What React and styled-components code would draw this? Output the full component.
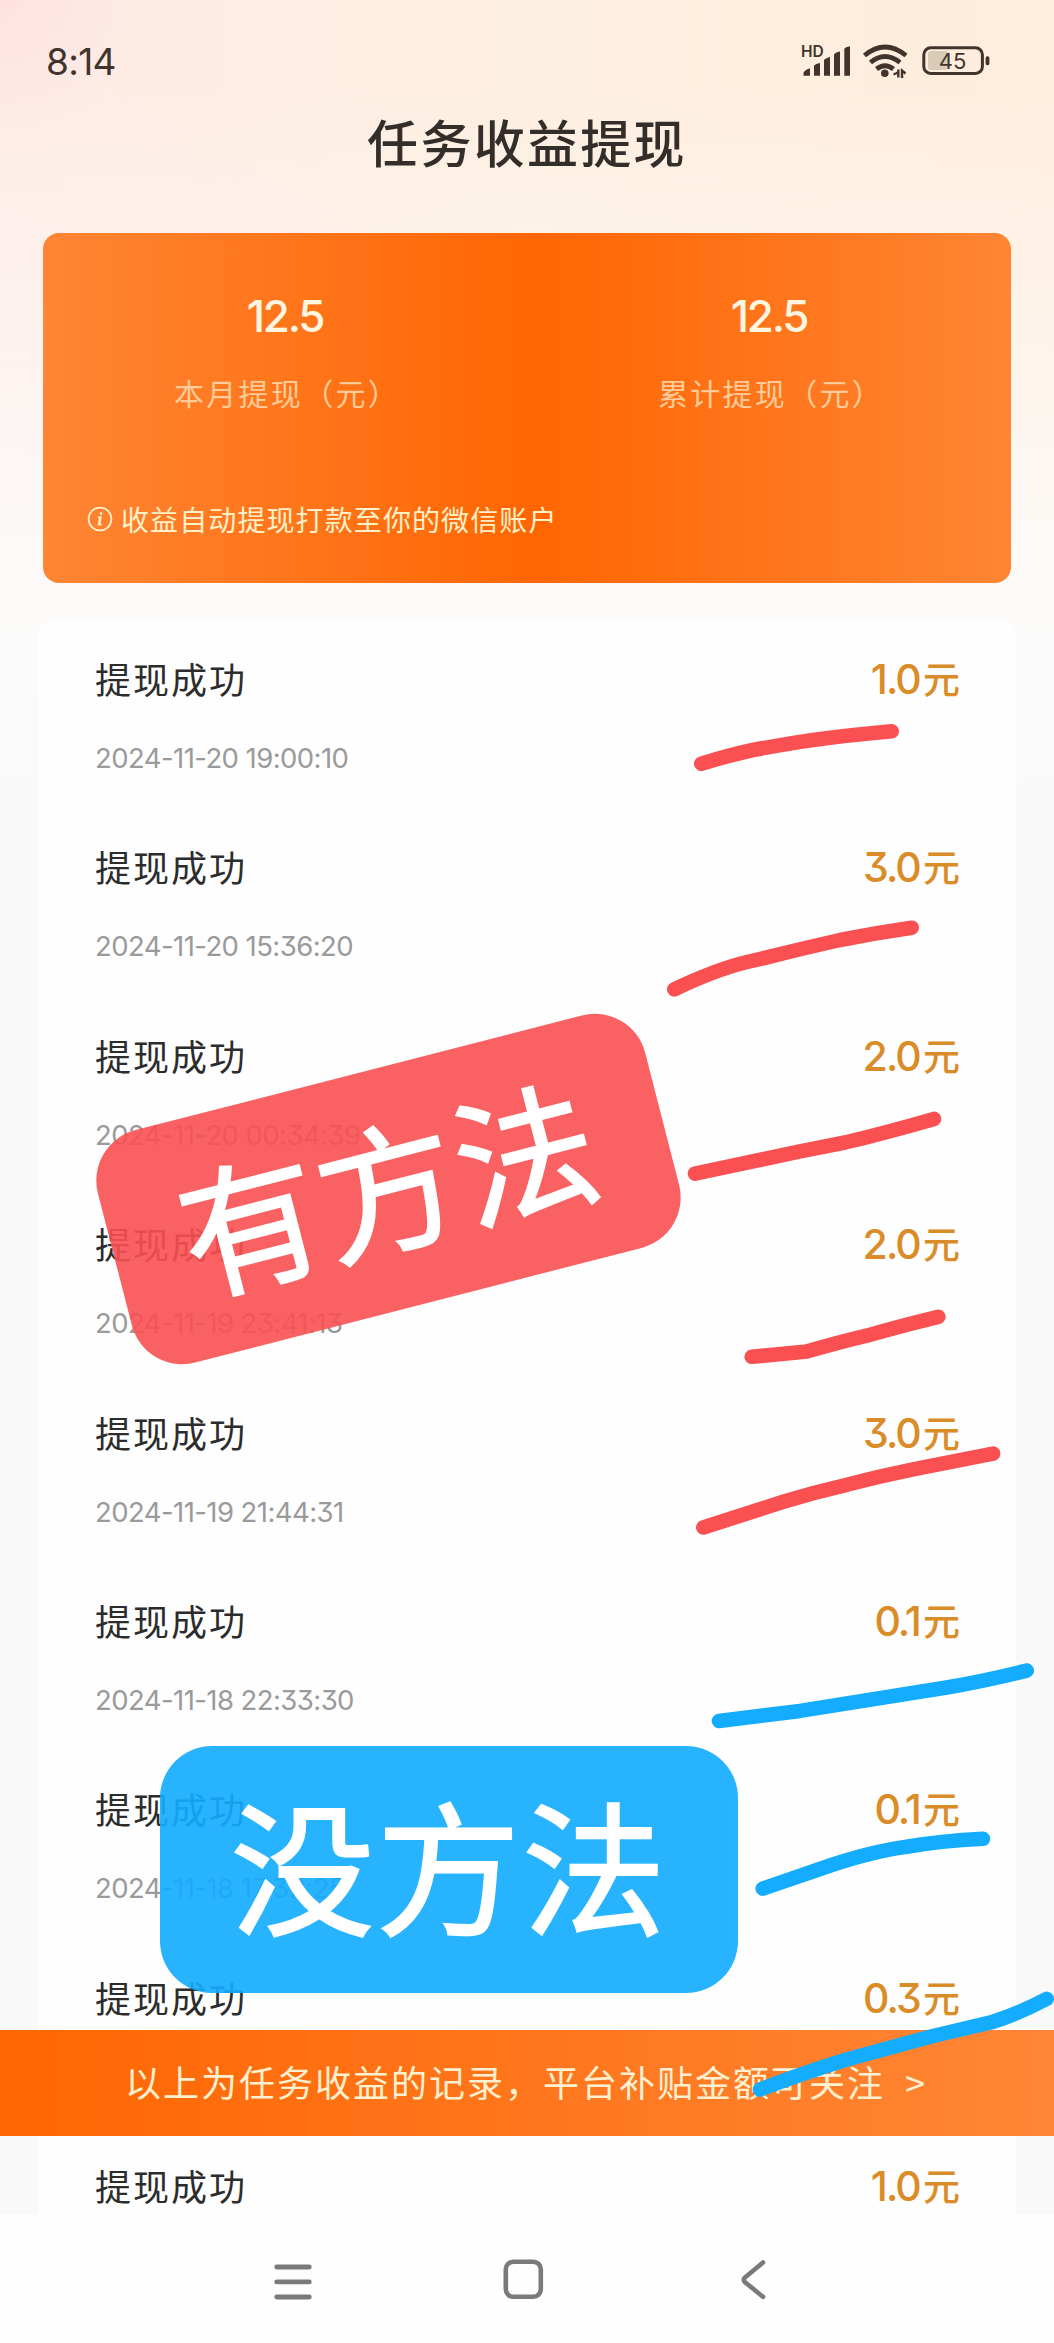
import React from "react";
import styled, { createGlobalStyle } from "styled-components";

const cjk = `"Noto Sans CJK SC", sans-serif`;
const latin = `Inter, "Noto Sans CJK SC", sans-serif`;

const GlobalStyle = createGlobalStyle`
  * {
    box-sizing: border-box;
  }
  body {
    margin: 0;
    background: #fff;
    font-family: ${cjk};
  }
`;

const Page = styled.div`
  position: relative;
  display: flex;
  flex-direction: column;
  width: 1054px;
  height: 2343px;
  overflow: hidden;
  background:
    radial-gradient(circle at 0 0, rgba(255, 220, 222, 0.6), rgba(255, 226, 222, 0) 140px),
    linear-gradient(180deg, rgba(251, 250, 249, 0) 80px, #fcfbfa 620px, #f9f9fa 820px),
    linear-gradient(90deg, #feebe6, #fdefe0 50%, #ffeddd);
`;

const StatusBar = styled.div`
  display: flex;
  align-items: center;
  justify-content: space-between;
  height: 124px;
  padding: 0 64px 0 46px;
  color: #40342c;
`;

const Clock = styled.span`
  padding-bottom: 2px;
  font: 400 37px ${latin};
  letter-spacing: -0.7px;
`;

const Title = styled.h1`
  height: 109px;
  margin: 0;
  font-size: 51px;
  font-weight: 500;
  line-height: 34px;
  letter-spacing: 2.3px;
  text-align: center;
  color: #332e2a;
`;

const SummaryCard = styled.section`
  width: 968px;
  height: 350px;
  margin: 0 43px;
  padding-top: 56px;
  border-radius: 16px;
  background: linear-gradient(90deg, #ff8534, #ff6602 51%, #ff8534);
`;

const Totals = styled.div`
  display: grid;
  grid-template-columns: 1fr 1fr;
`;

const Total = styled.div`
  display: flex;
  flex-direction: column;
  align-items: center;
`;

const TotalValue = styled.div`
  font: 500 44px/54px ${latin};
  letter-spacing: -2.2px;
  color: #fff6e2;
`;

const TotalLabel = styled.div`
  margin-top: 27px;
  padding-left: 4px;
  font-size: 30px;
  line-height: 44px;
  letter-spacing: 2.3px;
  color: #ffcb98;
`;

const Note = styled.div`
  display: flex;
  align-items: center;
  gap: 8px;
  margin: 85px 0 0 44px;
  font-size: 28px;
  line-height: 40px;
  letter-spacing: 1.1px;
  color: #fff0c8;
`;

const Records = styled.ul`
  flex: 1;
  min-height: 0;
  width: 978px;
  margin: 39px 38px 0;
  padding: 30px 58px 0 57px;
  overflow: hidden;
  list-style: none;
  border-radius: 12px 12px 0 0;
  background: #fefefe;
`;

const Record = styled.li`
  height: 188.4px;
`;

const RecordHead = styled.div`
  display: flex;
  align-items: center;
  justify-content: space-between;
  height: 52px;
`;

const RecordName = styled.span`
  font-size: 36px;
  letter-spacing: 2px;
  color: #2c2c2c;
`;

const Amount = styled.span`
  display: flex;
  align-items: center;
  padding-top: 2px;
  font: 500 41px/52px ${latin};
  font-feature-settings: "cv09";
  letter-spacing: -1.9px;
  color: #d98c28;
`;

const Unit = styled.span`
  margin: -2px 0 0 3px;
  font: 500 37px/52px ${cjk};
`;

const RecordTime = styled.div`
  margin-top: 32px;
  font: 400 27.5px/44px ${latin};
  font-feature-settings: "cv09";
  letter-spacing: -0.57px;
  color: #9a9a9a;
`;

const NavBar = styled.nav`
  display: flex;
  justify-content: space-between;
  height: 128px;
  padding: 44px 286px 0 273px;
  background: #fefefe;
`;

// sits on top of the record list
const FollowBanner = styled.div`
  position: absolute;
  top: 2030px;
  left: 0;
  display: flex;
  align-items: center;
  gap: 20px;
  width: 100%;
  height: 106px;
  padding: 0 0 5px 125px;
  font-size: 36px;
  letter-spacing: 2px;
  white-space: nowrap;
  color: #fff0d0;
  background: linear-gradient(90deg, #ff6602, #ff8636);
`;

const Sticker = styled.div`
  position: absolute;
  top: ${p => p.$top}px;
  left: ${p => p.$left}px;
  display: flex;
  align-items: center;
  justify-content: center;
  width: ${p => p.$width}px;
  height: ${p => p.$height}px;
  padding-bottom: 15px;
  border-radius: 52px;
  font-size: ${p => p.$size}px;
  font-weight: 400;
  line-height: 1;
  letter-spacing: 1.6px;
  color: #fff;
  -webkit-text-stroke: 2px #fff;
  background: ${p => p.$color};
  transform: rotate(${p => p.$angle || 0}deg);
`;

const Marks = styled.svg`
  position: absolute;
  top: 0;
  left: 0;
  fill: none;
  stroke-width: 14.6;
  stroke-linecap: round;
  stroke-linejoin: round;
`;

const records = [
  { amount: "1.0", time: "2024-11-20 19:00:10" },
  { amount: "3.0", time: "2024-11-20 15:36:20" },
  { amount: "2.0", time: "2024-11-20 00:34:39" },
  { amount: "2.0", time: "2024-11-19 23:41:13" },
  { amount: "3.0", time: "2024-11-19 21:44:31" },
  { amount: "0.1", time: "2024-11-18 22:33:30" },
  { amount: "0.1", time: "2024-11-18 17:32:25" },
  { amount: "0.3" },
  { amount: "1.0" }
];

const redMarks = [
  "M701.3 763.7Q730 755 753 750Q785 744 813 740Q850 735 891.7 731.3",
  "M674.3 989.3Q715 970 745 962.5L763 958.3Q800 949 840 940Q875 933 911.7 927.7",
  "M695 1173.6L800 1151.4L845 1142.5Q885 1133 934 1118.9",
  "M751.7 1356.8L806.7 1351.6Q840 1342 866.7 1335.7Q900 1326 938.3 1316.8",
  "M703.3 1527.5L783.3 1501.8Q815 1492 846.7 1484.8Q880 1476 913 1469.3L993 1453.6"
];

const blueMarks = [
  "M719 1720.9L800 1710.9Q875 1699 946.7 1687.5Q985 1681 1026.7 1670.6",
  "M762.7 1888.7L833 1864.5Q875 1851 905 1847Q940 1841 983 1838.8",
  "M760 2089.5Q800 2074 846.7 2059.5L933 2036Q975 2026 993 2021.8Q1020 2013 1046.7 1998.9"
];

function StatusIcons() {
  return (
    <svg width="194" height="42" viewBox="796 42 194 42" fill="none">
      <text x="801" y="57.5" fontFamily="Inter" fontSize="15.5" fontWeight="600" fill="#40342c">
        HD
      </text>
      <path
        fill="#40342c"
        d="M803.5 76.7V74Q804 71.5 810 69.3V76.7ZM814 76.7V67Q815 65 820 64V76.7ZM824 76.7V61Q825 59.5 830 58V76.7ZM834 76.7V55.5Q835 53.5 840 52.4V76.7ZM844.3 76.7V50Q845.5 48 850 47.3V76.7Z"
      />
      <path
        stroke="#40342c"
        strokeWidth="4.8"
        d="M864.5 56.5Q885 39.5 906 56.5M870.5 63.5Q885 51.5 900 63.5M876.5 70Q885 63.5 893.5 70"
      />
      <circle cx="884.8" cy="74.3" r="3.8" fill="#40342c" />
      <path
        stroke="#40342c"
        strokeWidth="2.4"
        d="M893.5 75.5L898 73.5M898.3 78.5V70.5M902 79V71.5L905.5 74.5"
      />
      <rect x="928" y="52" width="20" height="19" rx="3" fill="#d8ccb9" />
      <rect x="923.8" y="48.8" width="58.6" height="25.6" rx="7" stroke="#40342c" strokeWidth="3" />
      <rect x="985.6" y="57.3" width="3.8" height="9" rx="1.8" fill="#40342c" />
      <text x="938.7" y="69.9" fontFamily="Inter" fontSize="22" fontWeight="400" fill="#40342c">
        45
      </text>
    </svg>
  );
}

function InfoIcon() {
  return (
    <svg width="26" height="26" viewBox="0 0 26 26" fill="none" stroke="currentColor">
      <circle cx="13" cy="13" r="11.4" strokeWidth="1.8" />
      <path strokeWidth="2.4" d="M11 11.4H13.4L12 18.4H14.6" />
      <circle cx="14" cy="7.4" r="1" strokeWidth="1" fill="currentColor" />
    </svg>
  );
}

function NavIcons() {
  return (
    <>
      <svg width="40" height="44" viewBox="273 2259 40 44" stroke="#7a7a7a" strokeWidth="4.8" strokeLinecap="round">
        <path d="M276.7 2267H309.3M276.7 2281.9H309.3M276.7 2297H309.3" />
      </svg>
      <svg width="44" height="44" viewBox="501 2259 44 44" fill="none" stroke="#7a7a7a" strokeWidth="4.6">
        <rect x="505.8" y="2261.8" width="35" height="35" rx="7.5" />
      </svg>
      <svg width="35" height="44" viewBox="733 2259 35 44" fill="none" stroke="#7a7a7a" strokeWidth="4.6" strokeLinecap="round">
        <path d="M763 2262.5L744.8 2277.6Q742.6 2279.8 744.8 2282L763 2296.8" />
      </svg>
    </>
  );
}

export default class App extends React.Component {
  render() {
    return (
      <>
        <GlobalStyle />
        <Page>
          <StatusBar>
            <Clock>8:14</Clock>
            <StatusIcons />
          </StatusBar>
          <Title>任务收益提现</Title>
          <SummaryCard>
            <Totals>
              <Total>
                <TotalValue>12.5</TotalValue>
                <TotalLabel>本月提现（元）</TotalLabel>
              </Total>
              <Total>
                <TotalValue>12.5</TotalValue>
                <TotalLabel>累计提现（元）</TotalLabel>
              </Total>
            </Totals>
            <Note>
              <InfoIcon />
              收益自动提现打款至你的微信账户
            </Note>
          </SummaryCard>
          <Records>
            {records.map(({ amount, time }, i) => (
              <Record key={i}>
                <RecordHead>
                  <RecordName>提现成功</RecordName>
                  <Amount>
                    {amount}
                    <Unit>元</Unit>
                  </Amount>
                </RecordHead>
                {time && <RecordTime>{time}</RecordTime>}
              </Record>
            ))}
          </Records>
          <NavBar>
            <NavIcons />
          </NavBar>
          <FollowBanner>
            <span>以上为任务收益的记录，平台补贴金额可关注</span>
            <span>&gt;</span>
          </FollowBanner>
          <Sticker
            $top={1069}
            $left={106}
            $width={565}
            $height={240}
            $size={140}
            $angle={-14.4}
            $color="rgba(250, 80, 82, 0.9)"
          >
            有方法
          </Sticker>
          <Sticker
            $top={1746}
            $left={160}
            $width={578}
            $height={247}
            $size={144}
            $color="rgba(19, 172, 255, 0.91)"
          >
            没方法
          </Sticker>
          <Marks width="1054" height="2343" viewBox="0 0 1054 2343">
            {redMarks.map(d => (
              <path key={d} d={d} stroke="#fb5052" />
            ))}
            {blueMarks.map(d => (
              <path key={d} d={d} stroke="#13acfe" />
            ))}
          </Marks>
        </Page>
      </>
    );
  }
}
